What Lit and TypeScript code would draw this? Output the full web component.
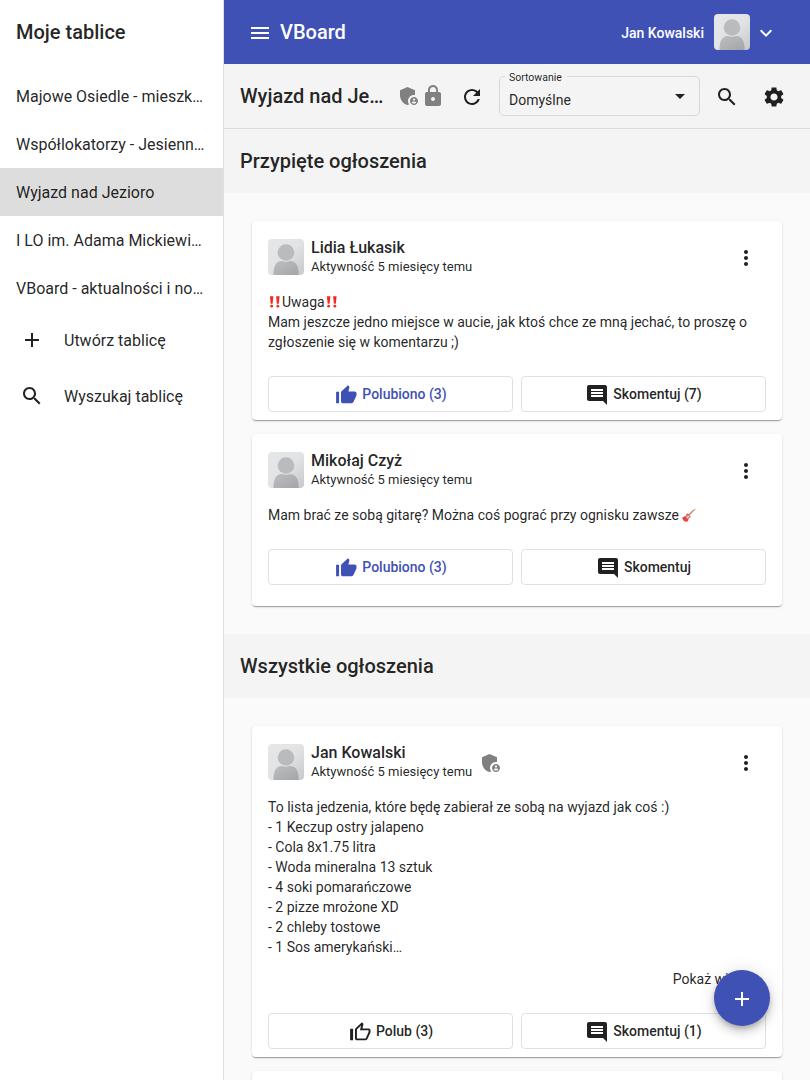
import { LitElement, html, css, svg } from "lit";
import { customElement } from "lit/decorators.js";

const ICONS: Record<string, string> = {
  menu: "M3 18h18v-2H3v2zm0-5h18v-2H3v2zm0-7v2h18V6H3z",
  expand: "M16.59 8.59 12 13.17 7.41 8.59 6 10l6 6 6-6z",
  add: "M19 13h-6v6h-2v-6H5v-2h6V5h2v6h6v2z",
  search:
    "M15.5 14h-.79l-.28-.27C15.41 12.59 16 11.11 16 9.5 16 5.91 13.09 3 9.5 3S3 5.91 3 9.5 5.91 16 9.5 16c1.61 0 3.09-.59 4.23-1.57l.27.28v.79l5 4.99L20.49 19l-4.99-5zm-6 0C7.01 14 5 11.99 5 9.5S7.01 5 9.5 5 14 7.01 14 9.5 11.99 14 9.5 14z",
  admin:
    "M17 11c.34 0 .67.04 1 .09V6.27L10.5 3 3 6.27v4.91c0 4.54 3.2 8.79 7.5 9.82.55-.13 1.08-.32 1.6-.55-.69-.98-1.1-2.17-1.1-3.45 0-3.31 2.69-6 6-6zM17 13c-2.21 0-4 1.79-4 4s1.79 4 4 4 4-1.79 4-4-1.79-4-4-4zm0 1.38c.62 0 1.12.51 1.12 1.12s-.51 1.12-1.12 1.12-1.12-.51-1.12-1.12.5-1.12 1.12-1.12zm0 5.37c-.93 0-1.74-.46-2.24-1.17.05-.72 1.51-1.08 2.24-1.08s2.19.36 2.24 1.08c-.5.71-1.31 1.17-2.24 1.17z",
  lock: "M18 8h-1V6c0-2.76-2.24-5-5-5S7 3.24 7 6v2H6c-1.1 0-2 .9-2 2v10c0 1.1.9 2 2 2h12c1.1 0 2-.9 2-2V10c0-1.1-.9-2-2-2zm-6 9c-1.1 0-2-.9-2-2s.9-2 2-2 2 .9 2 2-.9 2-2 2zm3.1-9H8.9V6c0-1.71 1.39-3.1 3.1-3.1 1.71 0 3.1 1.39 3.1 3.1v2z",
  refresh:
    "M17.65 6.35C16.2 4.9 14.21 4 12 4c-4.42 0-7.99 3.58-7.99 8s3.57 8 7.99 8c3.73 0 6.84-2.55 7.73-6h-2.08c-.82 2.33-3.04 4-5.65 4-3.31 0-6-2.69-6-6s2.69-6 6-6c1.66 0 3.14.69 4.22 1.78L13 11h7V4l-2.35 2.35z",
  settings:
    "M19.14 12.94c.04-.3.06-.61.06-.94 0-.32-.02-.64-.07-.94l2.03-1.58c.18-.14.23-.41.12-.61l-1.92-3.32c-.12-.22-.37-.29-.59-.22l-2.39.96c-.5-.38-1.03-.7-1.62-.94l-.36-2.54c-.04-.24-.24-.41-.48-.41h-3.84c-.24 0-.43.17-.47.41l-.36 2.54c-.59.24-1.13.57-1.62.94l-2.39-.96c-.22-.08-.47 0-.59.22L2.74 8.87c-.12.21-.08.47.12.61l2.03 1.58c-.05.3-.09.63-.09.94s.02.64.07.94l-2.03 1.58c-.18.14-.23.41-.12.61l1.92 3.32c.12.22.37.29.59.22l2.39-.96c.5.38 1.03.7 1.62.94l.36 2.54c.05.24.24.41.48.41h3.84c.24 0 .44-.17.47-.41l.36-2.54c.59-.24 1.13-.56 1.62-.94l2.39.96c.22.08.47 0 .59-.22l1.92-3.32c.12-.22.07-.47-.12-.61l-2.01-1.58zM12 15.6c-1.98 0-3.6-1.62-3.6-3.6s1.62-3.6 3.6-3.6 3.6 1.62 3.6 3.6-1.62 3.6-3.6 3.6z",
  more: "M12 8c1.1 0 2-.9 2-2s-.9-2-2-2-2 .9-2 2 .9 2 2 2zm0 2c-1.1 0-2 .9-2 2s.9 2 2 2 2-.9 2-2-.9-2-2-2zm0 6c-1.1 0-2 .9-2 2s.9 2 2 2 2-.9 2-2-.9-2-2-2z",
  liked:
    "M2.100 9.700h3V21.200h-3zM22.500 11.300c0-1-.87-1.800-1.940-1.800h-6.100l.92-4.100.03-.29c0-.37-.16-.71-.43-.95L13.950 3.200 7.560 9.130C7.200 9.450 7 9.900 7 10.400v9c0 1 .87 1.800 1.940 1.800h8.700c.8 0 1.500-.45 1.800-1.100l2.920-6.350c.09-.2.14-.42.14-.65z",
  like: "M2.100 9.700h3V21.200h-3zM22.500 11.300c0-1-.87-1.800-1.940-1.800h-6.100l.92-4.100.03-.29c0-.37-.16-.71-.43-.95L13.950 3.200 7.560 9.130C7.200 9.450 7 9.900 7 10.400v9c0 1 .87 1.800 1.940 1.800h8.700c.8 0 1.500-.45 1.800-1.100l2.920-6.350c.09-.2.14-.42.14-.65zM8.930 10.400l4.200-3.900-1.200 4.800h8.630v1.800l-2.900 6.300H8.930z",
  comment:
    "M21.990 4c0-1.100-.89-2-1.990-2H4c-1.100 0-2 .9-2 2v12c0 1.100.9 2 2 2h14l4 4-.01-18zM18 14H6v-2h12v2zm0-3H6V9h12v2zm0-3H6V6h12v2z",
};

const icon = (name: string, cls = "") =>
  html`<svg class="icon ${cls}" viewBox="0 0 24 24">${svg`<path d=${ICONS[name]} />`}</svg>`;

const avatar = () => html`
  <svg class="avatar" viewBox="0 0 36 36">
    <defs>
      <linearGradient id="bg" x1="0" y1="0" x2="1" y2="1">
        <stop offset="0" stop-color="#e6e7e8" />
        <stop offset="0.5" stop-color="#e2e3e5" />
        <stop offset="1" stop-color="#c6c8ca" />
      </linearGradient>
      <linearGradient id="fg" x1="0" y1="0" x2="1" y2="1">
        <stop offset="0" stop-color="#bcbec0" />
        <stop offset="1" stop-color="#a3a5a8" />
      </linearGradient>
    </defs>
    <rect width="36" height="36" fill="url(#bg)" />
    <circle cx="18" cy="13.5" r="8.3" fill="#b9bbbe" />
    <path d="M5.5 36C5.5 27 8 22 14 22q4 1.5 8 0c6 0 8.700 5 8.700 14z" fill="url(#fg)" />
  </svg>
`;

const bangs = () => html`<svg class="emoji" viewBox="0 0 14 14">
    <path fill="#f5281c" d="M1.900 1.200h3.500L4.600 8.800H2.700zM8.100 1.200h3.500L10.800 8.800H8.900z" />
    <circle cx="3.650" cy="11.200" r="1.400" fill="#f5281c" />
    <circle cx="9.850" cy="11.200" r="1.400" fill="#f5281c" />
  </svg>`;

const guitar = () => html`<svg class="emoji" viewBox="0 0 14 14">
    <path d="M6.500 7.500 11.800 2" stroke="#b98a62" stroke-width="1.200" />
    <path d="M11.300 2.300 12.800.6l1 .8-1.700 1.700z" fill="#e8b07c" />
    <path
      d="M.8 9.200c.8-1.300 2-.6 2.900-1.300.8-.7.300-2 1.500-2.300.9-.2.700.8 1.500 1.600s2 .4 2 1.300c0 1-1.500.8-2 1.800-.5.900.1 2-1 2.900-1.200 1-2.900.6-4-.5S-.1 10.400.8 9.200z"
      fill="#f04444"
    />
    <path d="M3.600 8.800 5.700 6.800l1.800 1.800-2.400 2.200z" fill="#f3dcdc" />
    <path d="m2.500 11 4.800-4.800" stroke="#77555a" stroke-width=".7" />
  </svg>`;

interface Post {
  author: string;
  admin?: boolean;
  body: unknown;
  more?: boolean;
  liked: boolean;
  like: string;
  comment: string;
}

const PINNED: Post[] = [
  {
    author: "Lidia Łukasik",
    body: html`<p>${bangs()}Uwaga${bangs()}</p>
      <p>Mam jeszcze jedno miejsce w aucie, jak ktoś chce ze mną jechać, to proszę o zgłoszenie się w komentarzu ;)</p>`,
    liked: true,
    like: "Polubiono (3)",
    comment: "Skomentuj (7)",
  },
  {
    author: "Mikołaj Czyż",
    body: html`<p>Mam brać ze sobą gitarę? Można coś pograć przy ognisku zawsze ${guitar()}</p>`,
    liked: true,
    like: "Polubiono (3)",
    comment: "Skomentuj",
  },
];

const ALL: Post[] = [
  {
    author: "Jan Kowalski",
    admin: true,
    body: [
      "To lista jedzenia, które będę zabierał ze sobą na wyjazd jak coś :)",
      "- 1 Keczup ostry jalapeno",
      "- Cola 8x1.75 litra",
      "- Woda mineralna 13 sztuk",
      "- 4 soki pomarańczowe",
      "- 2 pizze mrożone XD",
      "- 2 chleby tostowe",
      "- 1 Sos amerykański…",
    ].map((line) => html`<p>${line}</p>`),
    more: true,
    liked: false,
    like: "Polub (3)",
    comment: "Skomentuj (1)",
  },
];

const BOARDS = [
  "Majowe Osiedle - mieszk…",
  "Współlokatorzy - Jesienn…",
  "Wyjazd nad Jezioro",
  "I LO im. Adama Mickiewi…",
  "VBoard - aktualności i no…",
];

@customElement("app-root")
export class AppRoot extends LitElement {
  static styles = css`
    :host {
      display: block;
      height: 1080px;
      overflow: hidden;
      position: relative;
      font-family: Roboto, sans-serif;
      color: rgba(0, 0, 0, 0.87);
      background: #fafafa;
    }
    * {
      box-sizing: border-box;
    }
    h1, h2, h3, p {
      margin: 0;
      font-weight: 400;
    }
    .icon {
      display: block;
      flex: none;
      width: 24px;
      height: 24px;
      fill: currentColor;
    }
    .avatar {
      display: block;
      flex: none;
      width: 36px;
      height: 36px;
      border-radius: 4px;
    }
    .layout {
      display: grid;
      grid-template-columns: 224px 1fr;
      height: 100%;
    }
    .side {
      background: #fff;
      border-right: 1px solid #e0e0e0;
    }
    .title {
      font-size: 20px;
      line-height: 64px;
      font-weight: 500;
      white-space: nowrap;
    }
    .side .title {
      padding-left: 16px;
      margin-bottom: 8px;
    }
    .board {
      height: 48px;
      padding: 1px 0 0 16px;
      font-size: 16px;
      line-height: 48px;
      white-space: nowrap;
    }
    .board.active {
      background: #dddddd;
    }
    .action {
      display: flex;
      align-items: center;
      gap: 20px;
      height: 56px;
      padding-left: 20px;
      font-size: 16px;
    }
    .main {
      min-width: 0;
      height: 1080px;
      overflow: hidden;
    }
    .bar {
      display: flex;
      align-items: center;
      height: 64px;
      padding: 0 32px 0 24px;
      background: #3f51b5;
      color: #fff;
    }
    .bar .icon {
      margin-top: 2px;
    }
    .bar .title {
      flex: 1;
      padding-left: 8px;
    }
    .user {
      margin: 1px 10px 0 0;
      font-size: 14px;
      font-weight: 500;
    }
    .bar .chev {
      margin-left: 4px;
    }
    .tools {
      display: flex;
      align-items: center;
      height: 65px;
      padding: 0 16px;
      background: #f4f4f4;
      border-bottom: 1px solid #dcdcdc;
    }
    .tools .title {
      width: 157px;
    }
    .muted {
      color: #808080;
    }
    .tool {
      display: flex;
      align-items: center;
      justify-content: center;
      width: 40px;
      height: 40px;
      margin: 2px 7px 0;
    }
    .tool.last {
      margin-right: 0;
      margin-left: 0;
    }
    .select {
      display: flex;
      align-items: center;
      justify-content: space-between;
      width: 201px;
      height: 40px;
      padding: 8px 14px 0 9px;
      border: 1px solid #d8d8d8;
      border-radius: 5px;
      font-size: 14px;
      position: relative;
    }
    .select .label {
      position: absolute;
      top: -6px;
      left: 5px;
      padding: 0 5px 0 4px;
      background: #f4f4f4;
      font-size: 10.500px;
      line-height: 14px;
    }
    .arrow {
      border: 5px solid transparent;
      border-top-color: currentColor;
      border-bottom: 0;
      margin-bottom: 8px;
    }
    .section {
      height: 64px;
      padding-left: 16px;
      background: #f4f4f4;
    }
    .cards {
      display: flex;
      flex-direction: column;
      gap: 14px;
      padding: 28px;
    }
    .card {
      min-height: 172px;
      padding: 16px 16px 8px;
      background: #fff;
      border-radius: 4px;
      box-shadow: 0 2px 1px -1px rgba(0, 0, 0, 0.2), 0 1px 1px 0 rgba(0, 0, 0, 0.14),
        0 1px 3px 0 rgba(0, 0, 0, 0.12);
    }
    .head {
      display: flex;
      align-items: center;
      height: 40px;
      margin-bottom: 15px;
    }
    .who {
      margin-left: 7px;
      line-height: 20px;
      font-size: 13px;
    }
    .name {
      padding-top: 1px;
      height: 20px;
      font-size: 16px;
      font-weight: 500;
    }
    .badge {
      margin: 1px 0 0 7px;
    }
    .dots {
      margin: 2px 8px 0 auto;
    }
    .body {
      font-size: 14px;
      line-height: 20px;
      min-height: 20px;
    }
    .emoji {
      width: 14px;
      height: 14px;
      vertical-align: -2px;
      fill: none;
    }
    .show {
      margin: 12px 12px 0 0;
      text-align: right;
      font-size: 14px;
      line-height: 20px;
    }
    .row {
      display: grid;
      grid-template-columns: 1fr 1fr;
      gap: 8px;
      margin-top: 24px;
    }
    .btn {
      display: flex;
      align-items: center;
      justify-content: center;
      gap: 4px;
      height: 36px;
      border: 1px solid #e0e0e0;
      border-radius: 4px;
      font-size: 14px;
      font-weight: 500;
    }
    .btn.on {
      color: #3f51b5;
    }
    .low {
      margin-top: 2px;
    }
    .fab {
      position: absolute;
      right: 40.5px;
      bottom: 54px;
      display: flex;
      align-items: center;
      justify-content: center;
      width: 56px;
      height: 56px;
      border-radius: 50%;
      background: #3f51b5;
      color: #fff;
      box-shadow: 0 3px 5px -1px rgba(0, 0, 0, 0.2), 0 6px 10px 0 rgba(0, 0, 0, 0.14),
        0 1px 18px 0 rgba(0, 0, 0, 0.12);
    }
    .fab .icon {
      margin-top: 2px;
    }
  `;

  private card(post: Post) {
    return html`
      <article class="card">
        <div class="head">
          ${avatar()}
          <div class="who">
            <h3 class="name">${post.author}</h3>
            <div>Aktywność 5 miesięcy temu</div>
          </div>
          ${post.admin ? icon("admin", "muted badge") : ""} ${icon("more", "dots")}
        </div>
        <div class="body">${post.body}</div>
        ${post.more ? html`<div class="show">Pokaż więcej</div>` : ""}
        <div class="row">
          <div class="btn ${post.liked ? "on" : ""}">
            ${icon(post.liked ? "liked" : "like")}<span>${post.like}</span>
          </div>
          <div class="btn">${icon("comment", "low")}<span>${post.comment}</span></div>
        </div>
      </article>
    `;
  }

  render() {
    return html`
      <div class="layout">
        <nav class="side">
          <h1 class="title">Moje tablice</h1>
          ${BOARDS.map((b, i) => html`<div class="board ${i === 2 ? "active" : ""}">${b}</div>`)}
          <div class="action">${icon("add")}<span>Utwórz tablicę</span></div>
          <div class="action">${icon("search")}<span>Wyszukaj tablicę</span></div>
        </nav>
        <main class="main">
          <header class="bar">
            ${icon("menu")}
            <h1 class="title">VBoard</h1>
            <span class="user">Jan Kowalski</span>
            ${avatar()} ${icon("expand", "chev")}
          </header>
          <div class="tools">
            <h2 class="title">Wyjazd nad Je…</h2>
            ${icon("admin", "muted")} ${icon("lock", "muted")}
            <div class="tool">${icon("refresh")}</div>
            <div class="select">
              <span class="label">Sortowanie</span>
              <span>Domyślne</span>
              <span class="arrow"></span>
            </div>
            <div class="tool">${icon("search")}</div>
            <div class="tool last">${icon("settings")}</div>
          </div>
          <h2 class="title section">Przypięte ogłoszenia</h2>
          <section class="cards">${PINNED.map((p) => this.card(p))}</section>
          <h2 class="title section">Wszystkie ogłoszenia</h2>
          <section class="cards">
            ${ALL.map((p) => this.card(p))}
            <article class="card"></article>
          </section>
        </main>
      </div>
      <div class="fab">${icon("add")}</div>
    `;
  }
}
